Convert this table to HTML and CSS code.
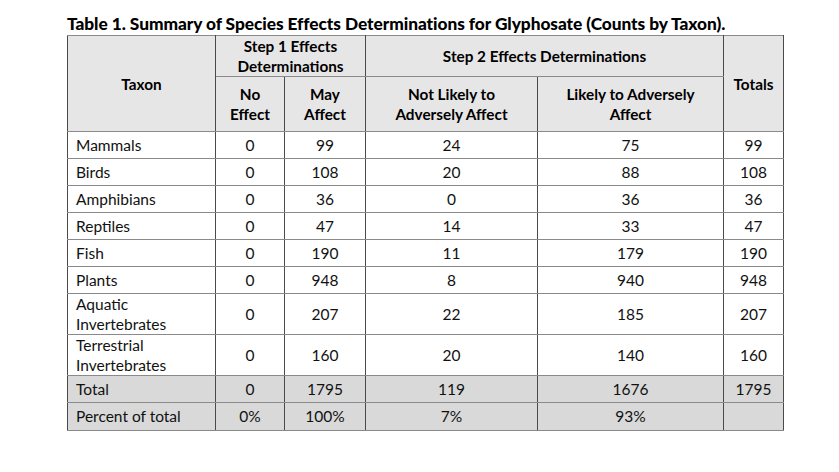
FILE: index.html
```html
<!DOCTYPE html>
<html>
<head>
<meta charset="utf-8">
<link rel="stylesheet" href="styles.css">
</head>
<body>
<div class="page">
  <div class="caption">Table 1. Summary of Species Effects Determinations for Glyphosate (Counts by Taxon).</div>
  <table class="summary">
    <colgroup>
      <col class="c-taxon"><col class="c-no"><col class="c-may"><col class="c-nla"><col class="c-laa"><col class="c-tot">
    </colgroup>
    <thead>
      <tr class="h1">
        <th rowspan="2">Taxon</th>
        <th colspan="2">Step 1 Effects<br>Determinations</th>
        <th colspan="2">Step 2 Effects Determinations</th>
        <th rowspan="2">Totals</th>
      </tr>
      <tr class="h2">
        <th>No<br>Effect</th>
        <th>May<br>Affect</th>
        <th>Not Likely to<br>Adversely Affect</th>
        <th>Likely to Adversely<br>Affect</th>
      </tr>
    </thead>
    <tbody>
      <tr class="r1"><td class="name">Mammals</td><td>0</td><td>99</td><td>24</td><td>75</td><td>99</td></tr>
      <tr class="r1"><td class="name">Birds</td><td>0</td><td>108</td><td>20</td><td>88</td><td>108</td></tr>
      <tr class="r1"><td class="name">Amphibians</td><td>0</td><td>36</td><td>0</td><td>36</td><td>36</td></tr>
      <tr class="r1"><td class="name">Reptiles</td><td>0</td><td>47</td><td>14</td><td>33</td><td>47</td></tr>
      <tr class="r1"><td class="name">Fish</td><td>0</td><td>190</td><td>11</td><td>179</td><td>190</td></tr>
      <tr class="r1"><td class="name">Plants</td><td>0</td><td>948</td><td>8</td><td>940</td><td>948</td></tr>
      <tr class="r2"><td class="name">Aquatic<br>Invertebrates</td><td>0</td><td>207</td><td>22</td><td>185</td><td>207</td></tr>
      <tr class="r2"><td class="name">Terrestrial<br>Invertebrates</td><td>0</td><td>160</td><td>20</td><td>140</td><td>160</td></tr>
      <tr class="r1 shade"><td class="name">Total</td><td>0</td><td>1795</td><td>119</td><td>1676</td><td>1795</td></tr>
      <tr class="r1 shade last"><td class="name">Percent of total</td><td>0%</td><td>100%</td><td>7%</td><td>93%</td><td></td></tr>
    </tbody>
  </table>
</div>
</body>
</html>
```

FILE: styles.css
```css
html, body {
  margin: 0;
  padding: 0;
  background: #ffffff;
}

.page {
  padding: 13px 0 0 67px;
  font-family: Lato, "Open Sans", sans-serif;
  color: #111;
}

.caption {
  font-weight: 900;
  font-size: 17.3px;
  line-height: 21px;
  color: #000;
  white-space: nowrap;
  letter-spacing: -0.05px;
}

.summary {
  border-collapse: collapse;
  table-layout: fixed;
  width: 716px;
  margin-top: 1px;
  font-size: 15.5px;
  line-height: 21px;
}

.c-taxon { width: 148px; }
.c-no { width: 69px; }
.c-may { width: 81px; }
.c-nla { width: 172px; }
.c-laa { width: 186px; }
.c-tot { width: 60px; }

.summary th,
.summary td {
  border-left: 1px solid #4a4a4a;
  border-right: 1px solid #4a4a4a;
  border-top: 1px solid #8a8a8a;
  border-bottom: 1px solid #8a8a8a;
  padding: 0 4px;
  text-align: center;
  vertical-align: middle;
}

.summary th {
  background: #e7e6e6;
  font-weight: bold;
  font-size: 15.3px;
  color: #000;
  line-height: 20px;
}

.summary .h1 { height: 40px; }
.summary .h2 { height: 55px; }
.summary .r1 { height: 27px; }
.summary .r2 { height: 41px; line-height: 20px; }
.summary .last { height: 28px; }

.summary td.name {
  text-align: left;
  padding-left: 8px;
}

.summary .shade td {
  background: #d9d9d9;
}
```
